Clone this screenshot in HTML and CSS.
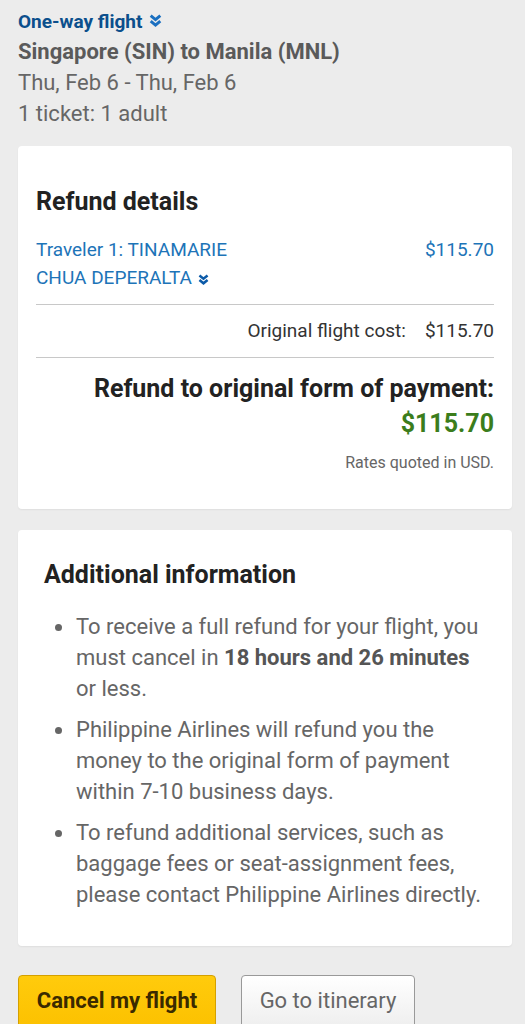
FILE: index.html
```html
<!DOCTYPE html>
<html lang="en">
<head>
  <meta charset="UTF-8" />
  <meta name="viewport" content="width=device-width, initial-scale=1.0"/>
  <title>Refund details</title>
  <link rel="stylesheet" href="styles.css">
</head>
<body>
  <div class="trip">
    <a href="#" class="trip-type">One-way flight
      <svg class="chev" viewBox="0 0 10 10" width="13" height="13"><path d="M1.3 1.3 L5 4.3 L8.7 1.3 M1.3 5.5 L5 8.5 L8.7 5.5" fill="none" stroke="currentColor" stroke-width="2.3"/></svg>
    </a>
    <div class="route">Singapore (SIN) to Manila (MNL)</div>
    <div class="trip-line">Thu, Feb 6 - Thu, Feb 6</div>
    <div class="trip-line">1 ticket: 1 adult</div>
  </div>

  <div class="card refund">
    <h2>Refund details</h2>
    <div class="traveler">
      <a href="#" class="traveler-name">Traveler 1: TINAMARIE<br>CHUA DEPERALTA
        <svg class="chev small" viewBox="0 0 10 10" width="11" height="11"><path d="M1.3 1.3 L5 4.3 L8.7 1.3 M1.3 5.5 L5 8.5 L8.7 5.5" fill="none" stroke="currentColor" stroke-width="2.3"/></svg>
      </a>
      <span class="traveler-price">$115.70</span>
    </div>
    <div class="cost-row">
      <span>Original flight cost:</span>
      <span>$115.70</span>
    </div>
    <div class="total">
      <div class="total-label">Refund to original form of payment:</div>
      <div class="total-amount">$115.70</div>
      <div class="note">Rates quoted in USD.</div>
    </div>
  </div>

  <div class="card info">
    <h2>Additional information</h2>
    <ul>
      <li>To receive a full refund for your flight, you must cancel in <b>18 hours and 26 minutes</b> or less.</li>
      <li>Philippine Airlines will refund you the money to the original form of payment within 7-10 business days.</li>
      <li>To refund additional services, such as baggage fees or seat-assignment fees, please contact Philippine Airlines directly.</li>
    </ul>
  </div>

  <div class="actions">
    <button class="btn btn-primary">Cancel my flight</button>
    <button class="btn btn-secondary">Go to itinerary</button>
  </div>
</body>
</html>
```

FILE: styles.css
```css
body {
  font-family: Roboto, "Noto Sans", sans-serif;
  background: #ececec;
  margin: 0;
  padding: 0 13px 0 18px;
  color: #222;
}

a {
  text-decoration: none;
}

.trip {
  padding-top: 7px;
  margin-bottom: 17px;
}

.trip-type {
  display: block;
  color: #0b4f8c;
  font-weight: bold;
  font-size: 19px;
  line-height: 30px;
}

.chev {
  vertical-align: 1px;
  margin-left: 2px;
  color: #1a6fc0;
}

.chev.small {
  vertical-align: -1px;
  margin-left: 1px;
  color: #0b5aa8;
}

.route {
  color: #5a5a5a;
  font-weight: bold;
  font-size: 22px;
  line-height: 30px;
}

.trip-line {
  color: #666;
  font-size: 22px;
  line-height: 31px;
}

.card {
  background: #fff;
  border-radius: 4px;
  box-shadow: 0 1px 2px rgba(0, 0, 0, 0.06);
}

.card h2 {
  margin: 0;
  font-size: 25px;
  font-weight: bold;
  color: #222;
}

.refund {
  padding: 41px 18px 36px;
  margin-bottom: 21px;
}

.refund h2 {
  line-height: 30px;
  margin-bottom: 19px;
}

.traveler {
  display: flex;
  justify-content: space-between;
  color: #1d74b8;
  font-size: 19px;
  line-height: 28px;
  padding-bottom: 12px;
  border-bottom: 1px solid #c8c8c8;
}

.traveler-name {
  color: #1d74b8;
}

.cost-row {
  display: flex;
  justify-content: flex-end;
  gap: 19px;
  font-size: 19px;
  color: #333;
  line-height: 24px;
  padding: 14px 0 14px;
  border-bottom: 1px solid #c8c8c8;
}

.total {
  text-align: right;
  padding-top: 16px;
}

.total-label {
  font-size: 25px;
  font-weight: bold;
  color: #222;
  line-height: 30px;
}

.total-amount {
  font-size: 25px;
  font-weight: bold;
  color: #3b7d1c;
  line-height: 36px;
  margin-top: 2px;
}

.note {
  font-size: 16px;
  color: #666;
  line-height: 20px;
  margin-top: 11px;
}

.info {
  padding: 30px 26px 36px;
  margin-bottom: 29px;
}

.info h2 {
  line-height: 30px;
  margin-bottom: 21px;
}

.info ul {
  margin: 0;
  padding-left: 32px;
  color: #666;
  font-size: 22px;
  line-height: 31px;
}

.info li {
  margin-bottom: 10px;
}

.info li:last-child {
  margin-bottom: 0;
}

.info li::marker {
  font-size: 24px;
  color: #666;
}

.info b {
  color: #555;
}

.actions {
  display: flex;
  gap: 25px;
}

.btn {
  font-family: Roboto, sans-serif;
  font-size: 22px;
  height: 54px;
  padding: 0 0 4px;
  border-radius: 4px;
}

.btn-primary {
  width: 198px;
  background: linear-gradient(#ffcb0c, #fcc100);
  border: 1px solid #d4a000;
  color: #3a2a00;
  font-weight: bold;
}

.btn-secondary {
  width: 174px;
  background: linear-gradient(#fff, #eee);
  border: 1px solid #999;
  color: #666;
}
```
